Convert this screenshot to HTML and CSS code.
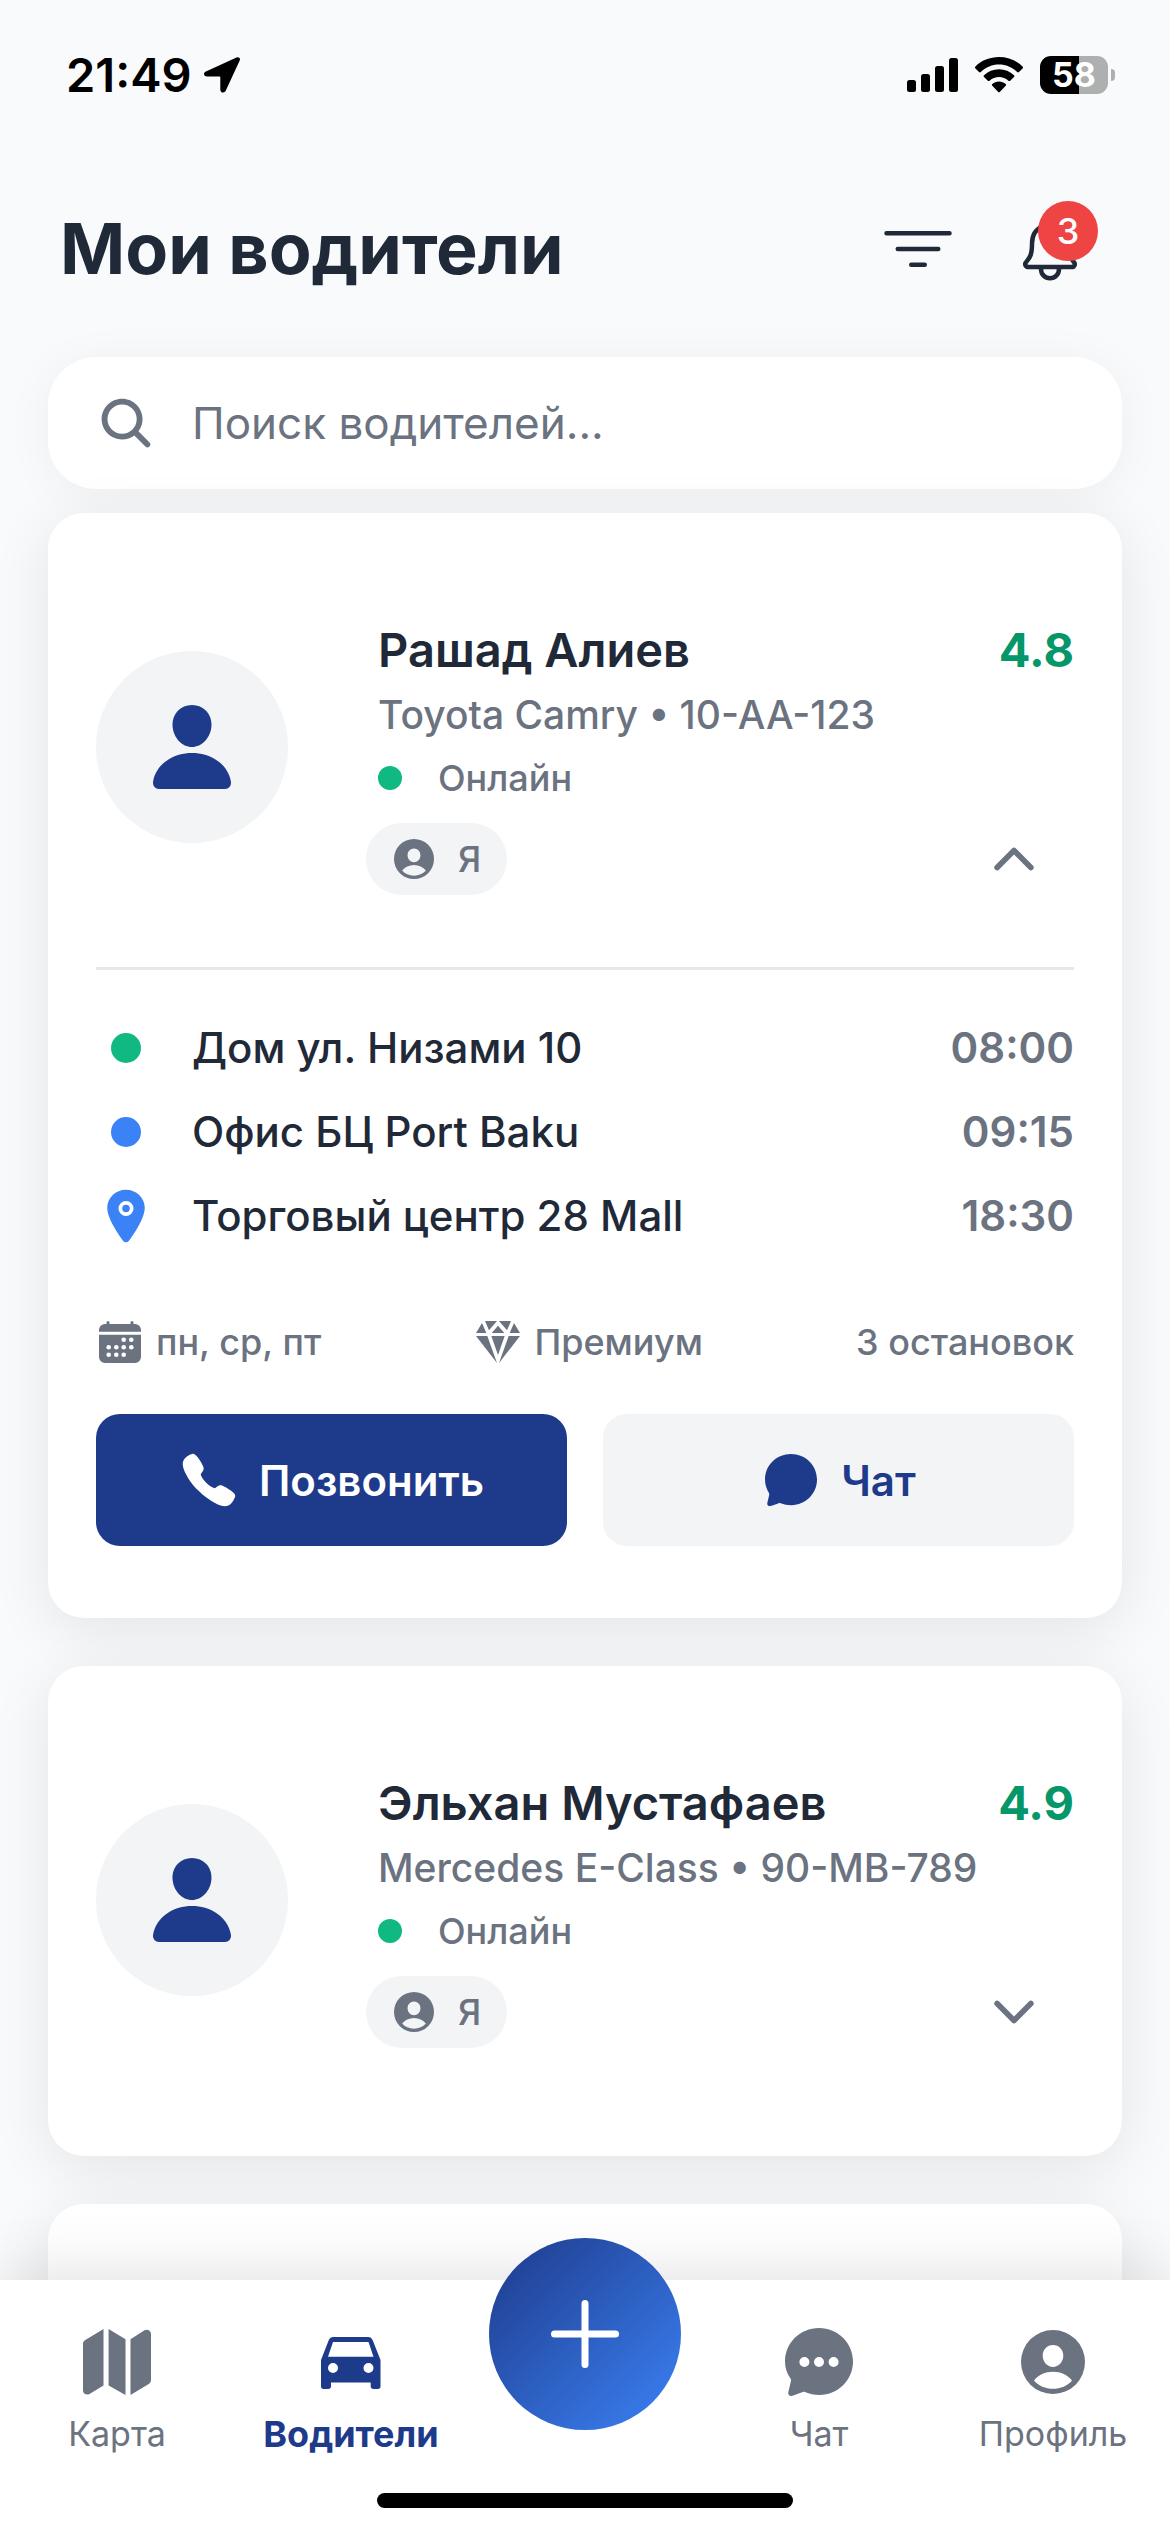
FILE: index.html
```html
<!DOCTYPE html>
<html lang="ru">
<head>
<meta charset="utf-8">
<meta name="viewport" content="width=device-width, initial-scale=1">
<title>Мои водители</title>
<link rel="stylesheet" href="styles.css">
</head>
<body>
<svg class="sprite" aria-hidden="true">
  <symbol id="person" viewBox="0 0 512 512"><path d="M332.64 64.58C313.18 43.57 286 32 256 32c-30.16 0-57.43 11.5-76.8 32.38-19.58 21.11-29.12 49.8-26.88 80.78C156.76 206.28 203.27 256 256 256s99.16-49.71 103.67-110.82c2.27-30.7-7.33-59.33-27.03-80.6zM432 480H80a31 31 0 01-24.2-11.13c-6.5-7.77-9.12-18.38-7.18-29.11C57.06 392.94 83.4 353.61 124.8 326c36.78-24.51 83.37-38 131.2-38s94.42 13.5 131.2 38c41.4 27.6 67.74 66.93 76.18 113.75 1.94 10.73-.68 21.34-7.18 29.11A31 31 0 01432 480z"/></symbol>
  <symbol id="account" viewBox="0 0 64 64"><path fill-rule="evenodd" d="M32 0a32 32 0 100 64 32 32 0 000-64zM32 15c6 0 10.300 4.800 10.300 10.800C42.300 32 37.500 37 32 37s-10.300-5-10.300-11.200C21.700 19.800 26 15 32 15zM13 50.500C17.500 45 24 41.700 32 41.700S46.500 45 51 50.500C46.500 55.800 39.500 58.800 32 58.800S17.500 55.800 13 50.500z"/></symbol>
  <symbol id="chevron-up" viewBox="0 0 512 512"><path d="M112 328l144-144 144 144" fill="none" stroke="currentColor" stroke-width="48" stroke-linecap="round" stroke-linejoin="round"/></symbol>
  <symbol id="chevron-down" viewBox="0 0 512 512"><path d="M112 184l144 144 144-144" fill="none" stroke="currentColor" stroke-width="48" stroke-linecap="round" stroke-linejoin="round"/></symbol>
</svg>

<div class="app">
  <div class="status">
    <div class="status-left">
      <span class="clock">21:49</span>
      <svg class="location-arrow" viewBox="0 0 36 36"><path d="M32.500.4C34.800-.6 36.700 1.300 35.700 3.500L21.700 33.800c-1.400 2.800-5.400 2-5.400-1.100V20.500c0-.7-.3-1-1-1H3.200c-3.500 0-4.400-3.600-1.300-5z"/></svg>
    </div>
    <div class="status-right">
      <svg class="signal" viewBox="0 0 51 34"><rect y="22" width="9" height="12" rx="2.500"/><rect x="14" y="16" width="9" height="18" rx="2.500"/><rect x="28" y="8" width="9" height="26" rx="2.500"/><rect x="42" width="9" height="34" rx="2.500"/></svg>
      <svg class="wifi" viewBox="0 0 48 36"><path d="M24 0C33 0 42 3.500 47.500 9.500c.7.700.7 1.300 0 2L44 15c-.6.600-1.200.6-1.800 0C37 10.200 31 7.600 24 7.600S11 10.200 5.800 15c-.6.600-1.200.6-1.800 0L.5 11.500c-.7-.7-.7-1.300 0-2C6 3.500 15 0 24 0zM24 12.200c5.800 0 11 2.200 15 6 .6.600.6 1.200 0 1.800l-3.800 3.700c-.6.600-1.200.5-1.800 0-2.700-2.400-5.900-3.700-9.400-3.700s-6.700 1.300-9.400 3.700c-.6.500-1.200.6-1.800 0L9 20c-.6-.6-.6-1.200 0-1.800 4-3.800 9.200-6 15-6zM24 24.500c2.500 0 4.900.9 6.700 2.500.6.500.6 1.200 0 1.800l-5.700 6c-.7.700-1.300.7-2 0l-5.700-6c-.6-.6-.6-1.300 0-1.800 1.800-1.600 4.200-2.500 6.700-2.500z"/></svg>
      <div class="battery"><span class="battery-level">58</span><span class="battery-cap"></span></div>
    </div>
  </div>

  <header class="header">
    <h1 class="title">Мои водители</h1>
    <button class="icon-button" type="button" aria-label="Фильтр">
      <svg class="icon-72" viewBox="0 0 512 512"><path class="outline" d="M32 144h448M112 256h288M208 368h96"/></svg>
    </button>
    <button class="icon-button" type="button" aria-label="Уведомления">
      <svg class="icon-72" viewBox="0 0 512 512"><path class="outline" d="M427.680 351.430C402 320 383.870 304 383.870 217.350 383.870 138 343.350 109.730 310 96c-4.430-1.820-8.600-6-9.950-10.550C294.200 65.540 277.800 48 256 48s-38.210 17.550-44 37.470c-1.350 4.600-5.520 8.710-9.950 10.530-33.390 13.750-73.870 41.920-73.870 121.350C128.130 304 110 320 84.320 351.430 73.680 364.450 83 384 101.610 384h308.880c18.510 0 27.770-19.610 17.190-32.570zM320 384v16a64 64 0 01-128 0v-16"/></svg>
      <span class="badge">3</span>
    </button>
  </header>

  <main class="content">
    <label class="search">
      <svg class="icon-60" viewBox="0 0 512 512" aria-hidden="true"><path d="M456.690 421.390L362.600 327.300a173.810 173.810 0 0034.840-104.580C397.440 126.380 319.060 48 222.720 48S48 126.380 48 222.720s78.380 174.720 174.720 174.720A173.810 173.810 0 00327.300 362.600l94.090 94.090a25 25 0 0035.300-35.300zM97.920 222.720a124.800 124.800 0 11124.800 124.800 124.950 124.950 0 01-124.800-124.800z"/></svg>
      <input class="search-input" type="search" placeholder="Поиск водителей..." aria-label="Поиск водителей">
    </label>

    <div class="cards">
      <article class="card">
        <div class="driver">
          <div class="avatar"><svg class="icon-96"><use href="#person"/></svg></div>
          <div class="driver-info">
            <div class="name-row"><h2 class="name">Рашад Алиев</h2><span class="rating">4.8</span></div>
            <p class="car">Toyota Camry • 10-AA-123</p>
            <p class="online"><span class="online-dot"></span>Онлайн</p>
            <div class="chip-row">
              <span class="chip"><svg class="icon-40"><use href="#account"/></svg>Я</span>
              <button class="toggle" type="button" aria-label="Свернуть" aria-expanded="true"><svg class="icon-60"><use href="#chevron-up"/></svg></button>
            </div>
          </div>
        </div>
        <ul class="route">
          <li class="stop"><span class="marker"><span class="stop-dot green"></span></span><span class="place">Дом ул. Низами 10</span><time class="time">08:00</time></li>
          <li class="stop"><span class="marker"><span class="stop-dot blue"></span></span><span class="place">Офис БЦ Port Baku</span><time class="time">09:15</time></li>
          <li class="stop"><span class="marker"><svg class="icon-60 pin" viewBox="0 0 512 512"><circle cx="256" cy="192" r="32"/><path d="M256 32c-88.220 0-160 68.650-160 153 0 40.170 18.310 93.590 54.420 158.780 29 52.340 62.550 99.670 80 123.220a31.750 31.750 0 0051.220 0c17.420-23.550 51-70.880 80-123.220C397.690 278.610 416 225.190 416 185c0-84.350-71.780-153-160-153zm0 224a64 64 0 1164-64 64.070 64.070 0 01-64 64z"/></svg></span><span class="place">Торговый центр 28 Mall</span><time class="time">18:30</time></li>
        </ul>
        <div class="facts">
          <span class="fact"><svg class="icon-48" viewBox="-3 -3 48 48"><path fill-rule="evenodd" d="M7.500 3V1.500a1.500 1.500 0 013 0V3h21V1.500a1.500 1.500 0 013 0V3H36a6 6 0 016 6v1.700H0V9a6 6 0 016-6zM0 13.800h42V36a6 6 0 01-6 6H6a6 6 0 01-6-6z"/><g fill="#fff"><circle cx="24.700" cy="18.700" r="2.300"/><circle cx="32.300" cy="18.700" r="2.300"/><circle cx="9.700" cy="26.300" r="2.300"/><circle cx="17.300" cy="26.300" r="2.300"/><circle cx="24.700" cy="26.300" r="2.300"/><circle cx="32.300" cy="26.300" r="2.300"/><circle cx="9.700" cy="33.700" r="2.300"/><circle cx="17.300" cy="33.700" r="2.300"/><circle cx="24.700" cy="33.700" r="2.300"/></g></svg>пн, ср, пт</span>
          <span class="fact"><svg class="icon-48" viewBox="-6 -9 144 144"><path d="M18 6l13 30H0zM27 0h36L39 28zM105 0H69l24 28zM66 14l19 22H47zM114 6l18 30h-31zM0 45h34l29 81zM132 45H98l-29 81zM46 45h40l-20 57z"/></svg>Премиум</span>
          <span class="fact">3 остановок</span>
        </div>
        <div class="actions">
          <button class="action primary" type="button"><svg class="icon-60" viewBox="0 0 512 512"><path d="M391 480c-19.520 0-46.940-7.060-88-30-49.930-28-88.550-53.850-138.210-103.380C116.910 298.770 93.610 267.790 61 208.450c-36.840-67-30.560-102.120-23.540-117.130C45.820 73.380 58.160 62.650 74.110 52a176.300 176.300 0 0128.640-15.200c1-.43 1.930-.84 2.760-1.210 4.950-2.230 12.450-5.600 21.950-2 6.340 2.380 12 7.250 20.860 16 18.170 17.920 43 57.830 52.160 77.430 6.150 13.210 10.220 21.930 10.230 31.710 0 11.450-5.760 20.280-12.750 29.810-1.310 1.790-2.610 3.500-3.870 5.160-7.610 10-9.280 12.890-8.180 18.050 2.230 10.370 18.860 41.240 46.190 68.510s57.310 42.850 67.720 45.070c5.380 1.150 8.330-.59 18.650-8.470 1.480-1.130 3-2.300 4.590-3.470 10.660-7.930 19.080-13.540 30.260-13.540h.06c9.730 0 18.060 4.220 31.860 11.180 18 9.080 59.110 33.590 77.140 51.780 8.770 8.840 13.660 14.480 16.050 20.810 3.600 9.530.21 17-2 22-.37.83-.78 1.740-1.210 2.750a176.490 176.490 0 01-15.290 28.580c-10.630 15.900-21.400 28.210-39.380 36.580A67.420 67.420 0 01391 480z"/></svg>Позвонить</button>
          <button class="action secondary" type="button"><svg class="icon-60" viewBox="-4 -4 60 60"><path d="M26 0C40.500 0 52 11.400 52 25.600S40.500 51.200 26.500 51.200c-4.300 0-7.500-.7-11-1.900-.8-.3-1.500-.2-2.300.1l-7.400 2.500c-2.100.7-4-.8-3.500-3L4.200 41c.2-.8 0-1.500-.4-2.200C1.500 35 0 30.600 0 25.600 0 11.400 11.500 0 26 0z"/></svg>Чат</button>
        </div>
      </article>

      <article class="card">
        <div class="driver">
          <div class="avatar"><svg class="icon-96"><use href="#person"/></svg></div>
          <div class="driver-info">
            <div class="name-row"><h2 class="name">Эльхан Мустафаев</h2><span class="rating">4.9</span></div>
            <p class="car">Mercedes E-Class • 90-MB-789</p>
            <p class="online"><span class="online-dot"></span>Онлайн</p>
            <div class="chip-row">
              <span class="chip"><svg class="icon-40"><use href="#account"/></svg>Я</span>
              <button class="toggle" type="button" aria-label="Развернуть" aria-expanded="false"><svg class="icon-60"><use href="#chevron-down"/></svg></button>
            </div>
          </div>
        </div>
      </article>

      <article class="card"></article>
    </div>
  </main>

  <nav class="tabbar">
    <div class="tabs">
      <a class="tab" href="#map"><svg class="icon-72" viewBox="-2 -3 72 72"><path d="M20.500 0v56.500L6.500 65C3.500 66.500 0 64.800 0 61.500V15c0-1.800.8-3 2.300-4zM25.600 0l16.900 10.300V66l-16.900-9.500zM47.500 10.300L61.500 1.200C64.500-.3 68 1.500 68 5v46c0 1.800-.8 3-2.300 4L47.500 66z"/></svg>Карта</a>
      <a class="tab active" href="#drivers" aria-current="page"><svg class="icon-72" viewBox="-6 -11 72 72"><path fill-rule="evenodd" d="M12.500 0h34.500c2.300 0 3.900 1.200 4.700 3.300L59.500 23v26.500c0 1.600-1 2.500-2.500 2.500h-4.500c-1.600 0-2.800-1-2.800-2.500v-4H10v4c0 1.500-1.200 2.500-2.800 2.500H2.500C1 52 0 51.100 0 49.500V23L7.700 3.300C8.500 1.200 10.200 0 12.500 0zM12 5L7 19.700h45.500L47.500 5zM12 26a5 5 0 100 10 5 5 0 000-10zM47.500 26a5 5 0 100 10 5 5 0 000-10z"/></svg>Водители</a>
      <button class="fab" type="button" aria-label="Добавить"><svg class="icon-72" viewBox="0 0 72 72"><path d="M36 5.500v61M5.500 36h61" stroke="#fff" stroke-width="7" stroke-linecap="round"/></svg></button>
      <a class="tab" href="#chat"><svg class="icon-72" viewBox="-2 -2 72 72"><path fill-rule="evenodd" d="M34 0C53 0 68 15 68 33.500S53 67 34.500 67c-5.300 0-10-1.100-14.500-3-.8-.3-1.400-.3-2.200 0L7.500 67.700C5 68.600 2.800 67 3.300 64.300L6 52.800c.2-.9 0-1.500-.5-2.300C2 45.500 0 40 0 33.500 0 15 15 0 34 0zM19.400 29a5 5 0 100 10 5 5 0 000-10zM34 29a5 5 0 100 10 5 5 0 000-10zM48.600 29a5 5 0 100 10 5 5 0 000-10z"/></svg>Чат</a>
      <a class="tab" href="#profile"><svg class="icon-72 inset"><use href="#account"/></svg>Профиль</a>
    </div>
    <div class="home-indicator"></div>
  </nav>
</div>
</body>
</html>
```
FILE: styles.css
```css
* {
  box-sizing: border-box;
}

body {
  margin: 0;
  font-family: Inter, "Liberation Sans", sans-serif;
  color: #1f2937;
  background: #f9fafc;
}

h1, h2, p, ul {
  margin: 0;
  padding: 0;
}

button {
  padding: 0;
  border: 0;
  background: none;
  font: inherit;
  color: inherit;
}

svg {
  display: block;
  flex: none;
  fill: currentColor;
}

.sprite {
  position: absolute;
  width: 0;
  height: 0;
}

.app {
  display: flex;
  flex-direction: column;
  height: 100vh;
}

/* Icon sizes */
.icon-40 { width: 40px; height: 40px; }
.icon-48 { width: 48px; height: 48px; }
.icon-60 { width: 60px; height: 60px; }
.icon-72 { width: 72px; height: 72px; }
.icon-96 { width: 96px; height: 96px; }
.inset { padding: 4px; }

.outline {
  fill: none;
  stroke: currentColor;
  stroke-width: 32;
  stroke-linecap: round;
  stroke-linejoin: round;
}

/* Status bar */
.status {
  display: flex;
  flex: none;
  align-items: center;
  justify-content: space-between;
  height: 141px;
  padding: 8px 55px 0 66px;
  color: #000;
}

.status-left {
  display: flex;
  align-items: center;
  gap: 12px;
}

.clock {
  font-size: 47px;
  font-weight: 600;
}

.location-arrow {
  width: 36px;
  height: 36px;
}

.status-right {
  display: flex;
  align-items: center;
  gap: 17px;
}

.signal {
  width: 51px;
  height: 34px;
}

.wifi {
  width: 48px;
  height: 36px;
}

.battery {
  display: flex;
  align-items: center;
  gap: 3px;
}

.battery-level {
  width: 68px;
  border-radius: 11px;
  background: linear-gradient(90deg, #000 57%, #aeafb1 57%);
  color: #fff;
  font-size: 34px;
  font-weight: 700;
  line-height: 38px;
  text-align: center;
}

.battery-cap {
  width: 4px;
  height: 12px;
  border-radius: 0 4px 4px 0;
  background: #aeafb1;
}

/* Header */
.header {
  display: flex;
  flex: none;
  align-items: center;
  height: 216px;
  padding: 0 54px 0 60px;
}

.title {
  flex: 1;
  font-size: 70px;
  font-weight: 700;
  line-height: 84px;
}

.icon-button {
  position: relative;
  display: flex;
  align-items: center;
  justify-content: center;
  width: 132px;
  height: 132px;
}

.badge {
  position: absolute;
  top: 18px;
  right: 18px;
  width: 60px;
  border-radius: 30px;
  background: #ef4444;
  color: #fff;
  font-size: 36px;
  font-weight: 500;
  line-height: 60px;
  text-align: center;
}

/* Search */
.content {
  display: flex;
  flex: 1;
  flex-direction: column;
  gap: 24px;
  min-height: 0;
}

.search {
  display: flex;
  flex: none;
  align-items: center;
  gap: 36px;
  height: 132px;
  margin: 0 48px;
  padding: 0 48px;
  border-radius: 48px;
  background: #fff;
  box-shadow: 0 6px 48px rgba(0, 0, 0, 0.05);
  color: #6b7280;
}

.search-input {
  flex: 1;
  min-width: 0;
  padding: 0;
  border: 0;
  outline: 0;
  background: none;
  color: #1f2937;
  font: inherit;
  font-size: 44px;
}

.search-input::placeholder {
  color: #6b7280;
  opacity: 1;
}

/* Driver cards */
.cards {
  display: flex;
  flex: 1;
  flex-direction: column;
  gap: 48px;
  min-height: 0;
  padding: 0 48px;
}

.card {
  flex: none;
  min-height: 76px;
  padding: 48px;
  border-radius: 36px;
  background: #fff;
  box-shadow: 0 12px 60px rgba(0, 0, 0, 0.09);
}

.search,
.card {
  position: relative;
}

.card:last-child {
  flex: 1 1 0;
  min-height: 0;
  padding: 0;
  border-radius: 36px 36px 0 0;
}

.driver {
  display: flex;
  gap: 90px;
  padding: 56px 0 60px;
}

.avatar {
  display: flex;
  flex: none;
  align-items: center;
  justify-content: center;
  width: 192px;
  height: 192px;
  margin-top: 34px;
  border-radius: 50%;
  background: #f3f4f6;
  color: #1e3a8a;
}

.driver-info {
  flex: 1;
  min-width: 0;
}

.name-row {
  display: flex;
  justify-content: space-between;
  font-size: 47px;
  line-height: 66px;
}

.name {
  font-size: inherit;
  font-weight: 600;
}

.rating {
  color: #059669;
  font-weight: 700;
}

.car {
  color: #6b7280;
  font-size: 39px;
  font-weight: 500;
  line-height: 64px;
}

.online {
  display: flex;
  align-items: center;
  gap: 36px;
  color: #6b7280;
  font-size: 36px;
  font-weight: 500;
  line-height: 62px;
}

.online-dot {
  width: 24px;
  height: 24px;
  border-radius: 50%;
  background: #10b981;
}

.chip-row {
  display: flex;
  align-items: center;
  justify-content: space-between;
  margin: 14px 30px 0 -12px;
}

.chip {
  display: flex;
  align-items: center;
  gap: 24px;
  padding: 0 26px 0 28px;
  border-radius: 36px;
  background: #f3f4f6;
  color: #6b7280;
  font-size: 36px;
  font-weight: 500;
  line-height: 72px;
}

.toggle {
  color: #6b7280;
}

/* Route */
.route {
  margin-top: 12px;
  padding-top: 36px;
  border-top: 3px solid #e5e7eb;
  list-style: none;
}

.stop {
  display: flex;
  align-items: center;
  gap: 36px;
  font-size: 42px;
  font-weight: 500;
  line-height: 84px;
}

.marker {
  display: flex;
  align-items: center;
  justify-content: center;
  width: 60px;
}

.stop-dot {
  width: 30px;
  height: 30px;
  border-radius: 50%;
}

.green { background: #10b981; }
.blue { background: #3b82f6; }
.pin { color: #3b82f6; }

.place {
  flex: 1;
}

.time {
  color: #6b7280;
  font-weight: 600;
}

/* Trip facts */
.facts {
  display: flex;
  align-items: center;
  justify-content: space-between;
  margin-top: 54px;
  color: #6b7280;
  font-size: 36px;
  font-weight: 500;
  line-height: 60px;
}

.fact {
  display: flex;
  align-items: center;
  gap: 12px;
}

/* Buttons */
.actions {
  display: flex;
  gap: 36px;
  margin: 42px 0 24px;
}

.action {
  display: flex;
  flex: 1;
  align-items: center;
  justify-content: center;
  gap: 20px;
  height: 132px;
  border-radius: 24px;
  font-size: 42px;
  font-weight: 600;
}

.primary {
  background: #1e3a8a;
  color: #fff;
}

.secondary {
  background: #f3f4f6;
  color: #1e3a8a;
}

/* Bottom navigation */
.tabbar {
  position: relative;
  flex: none;
  padding-bottom: 24px;
  background: #fff;
  box-shadow: 0 -6px 60px rgba(0, 0, 0, 0.12);
}

.tabs {
  display: grid;
  grid-template-columns: repeat(5, 1fr);
  height: 213px;
}

.tab {
  display: flex;
  flex-direction: column;
  align-items: center;
  gap: 12px;
  padding-top: 46px;
  color: #6b7280;
  font-size: 34px;
  line-height: 48px;
  text-decoration: none;
}

.active {
  color: #1e3a8a;
  font-size: 36px;
  font-weight: 700;
}

.fab {
  display: flex;
  align-items: center;
  justify-content: center;
  justify-self: center;
  width: 192px;
  height: 192px;
  margin-top: -42px;
  border-radius: 50%;
  background: linear-gradient(135deg, #1e3a8a, #3b82f6);
}

.home-indicator {
  width: 416px;
  height: 15px;
  margin: 0 auto;
  border-radius: 8px;
  background: #000;
}
```
